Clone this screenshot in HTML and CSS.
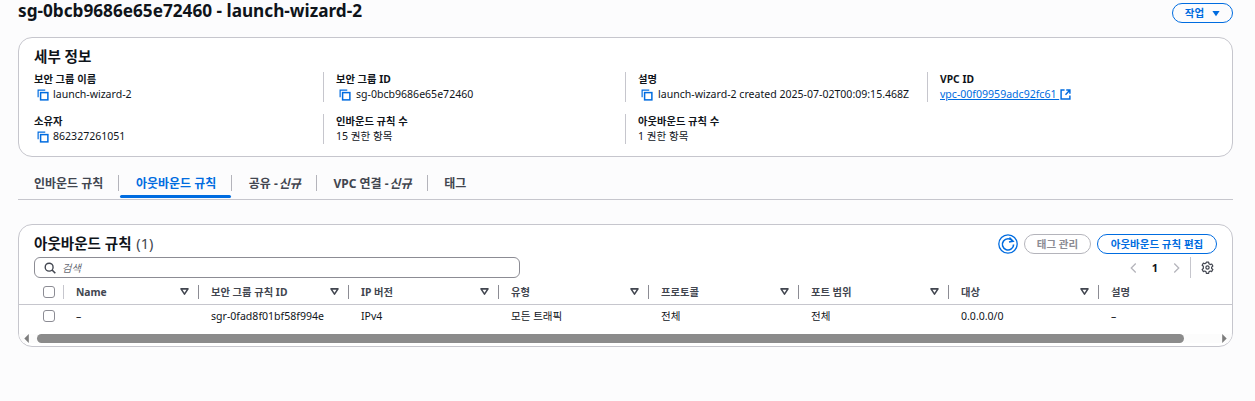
FILE: index.html
```html
<!DOCTYPE html>
<html lang="ko">
<head>
<meta charset="utf-8">
<title>sg-0bcb9686e65e72460 - launch-wizard-2</title>
<link rel="stylesheet" href="styles.css">
</head>
<body>
<svg class="defs" width="0" height="0" aria-hidden="true">
  <symbol id="copy" viewBox="0 0 16 16">
    <path d="M1.5 11V1.5H11" fill="none" stroke="currentColor" stroke-width="1.6"/>
    <rect x="4.8" y="4.8" width="9.7" height="9.7" fill="none" stroke="currentColor" stroke-width="2"/>
  </symbol>
  <symbol id="sort" viewBox="0 0 10 8">
    <path d="M1 1h8L5 7z" fill="none" stroke="currentColor" stroke-width="1.8" stroke-linejoin="round"/>
  </symbol>
</svg>
<main class="page">
  <header class="title-row">
    <h1 class="title">sg-0bcb9686e65e72460 - launch-wizard-2</h1>
    <button class="btn btn-action">작업 <svg class="caret" viewBox="0 0 10 8"><path d="M0.5 1h9L5 7.5z" fill="currentColor"/></svg></button>
  </header>

  <section class="panel details">
    <h2 class="details-title">세부 정보</h2>
    <div class="kv-grid">
      <div class="kv first"><div class="k">보안 그룹 이름</div><div class="v"><svg class="copy"><use href="#copy"/></svg>launch-wizard-2</div></div>
      <div class="kv"><div class="k">보안 그룹 ID</div><div class="v"><svg class="copy"><use href="#copy"/></svg>sg-0bcb9686e65e72460</div></div>
      <div class="kv"><div class="k">설명</div><div class="v"><svg class="copy"><use href="#copy"/></svg>launch-wizard-2 created 2025-07-02T00:09:15.468Z</div></div>
      <div class="kv"><div class="k">VPC ID</div><div class="v"><a class="link" href="#">vpc-00f09959adc92fc61 </a><svg class="ext" viewBox="0 0 12 12"><path d="M5 1.2H1.2v9.6h9.6V7" fill="none" stroke="currentColor" stroke-width="1.6"/><path d="M6 6.2 10.6 1.4M6.8 1.2h4v4" fill="none" stroke="currentColor" stroke-width="1.6"/></svg></div></div>
      <div class="kv first"><div class="k">소유자</div><div class="v"><svg class="copy"><use href="#copy"/></svg>862327261051</div></div>
      <div class="kv"><div class="k">인바운드 규칙 수</div><div class="v plain">15 권한 항목</div></div>
      <div class="kv"><div class="k">아웃바운드 규칙 수</div><div class="v plain">1 권한 항목</div></div>
    </div>
  </section>

  <nav class="tabs">
    <a class="tab">인바운드 규칙</a>
    <a class="tab active">아웃바운드 규칙</a>
    <a class="tab">공유 -<i>신규</i></a>
    <a class="tab">VPC 연결 -<i>신규</i></a>
    <a class="tab">태그</a>
  </nav>

  <section class="panel rules">
    <div class="rules-head">
      <h2 class="rules-title">아웃바운드 규칙 <span class="count">(1)</span></h2>
      <div class="actions">
        <button class="refresh" aria-label="새로 고침"><svg viewBox="0 0 20 20"><circle cx="10" cy="10" r="9.2" fill="none" stroke="currentColor" stroke-width="1.3"/><path d="M14.6 7.2A5.6 5.6 0 1 0 15.6 10.4" fill="none" stroke="currentColor" stroke-width="1.6"/><path d="M11.4 3.6 15 7.2l-4 .8" fill="none" stroke="currentColor" stroke-width="1.6"/></svg></button>
        <button class="btn btn-disabled">태그 관리</button>
        <button class="btn btn-edit">아웃바운드 규칙 편집</button>
      </div>
    </div>
    <div class="tools">
      <label class="search">
        <svg class="search-icon" viewBox="0 0 14 14"><circle cx="6" cy="6" r="4.6" fill="none" stroke="currentColor" stroke-width="1.6"/><path d="m9.4 9.4 3.8 3.8" stroke="currentColor" stroke-width="1.8"/></svg>
        <input class="search-input" placeholder="검색">
      </label>
      <div class="pager">
        <svg class="chev" viewBox="0 0 10 12"><path d="M7.5 1 2.5 6l5 5" fill="none" stroke="currentColor" stroke-width="1.4"/></svg>
        <span class="page-num">1</span>
        <svg class="chev" viewBox="0 0 10 12"><path d="M2.5 1l5 5-5 5" fill="none" stroke="currentColor" stroke-width="1.4"/></svg>
        <span class="pager-sep"></span>
        <svg class="gear" viewBox="0 0 16 16"><path d="M6.6 1.5h2.8l.4 2 1.5.9 1.9-.7 1.4 2.5-1.5 1.3v1.7l1.5 1.3-1.4 2.5-1.9-.7-1.5.9-.4 2H6.6l-.4-2-1.5-.9-1.9.7-1.4-2.5 1.5-1.3V6.5L1.4 5.2l1.4-2.5 1.9.7 1.5-.9z" fill="none" stroke="currentColor" stroke-width="1.5" stroke-linejoin="round"/><circle cx="8" cy="8" r="2" fill="none" stroke="currentColor" stroke-width="1.5"/></svg>
      </div>
    </div>
    <div class="table">
      <div class="row head">
        <div class="cell check"><span class="box"></span></div>
        <div class="cell th">Name<svg class="sort"><use href="#sort"/></svg></div>
        <div class="cell th">보안 그룹 규칙 ID<svg class="sort"><use href="#sort"/></svg></div>
        <div class="cell th">IP 버전<svg class="sort"><use href="#sort"/></svg></div>
        <div class="cell th">유형<svg class="sort"><use href="#sort"/></svg></div>
        <div class="cell th">프로토콜<svg class="sort"><use href="#sort"/></svg></div>
        <div class="cell th">포트 범위<svg class="sort"><use href="#sort"/></svg></div>
        <div class="cell th">대상<svg class="sort"><use href="#sort"/></svg></div>
        <div class="cell th">설명</div>
      </div>
      <div class="row body">
        <div class="cell check"><span class="box"></span></div>
        <div class="cell">–</div>
        <div class="cell">sgr-0fad8f01bf58f994e</div>
        <div class="cell">IPv4</div>
        <div class="cell">모든 트래픽</div>
        <div class="cell">전체</div>
        <div class="cell">전체</div>
        <div class="cell">0.0.0.0/0</div>
        <div class="cell">–</div>
      </div>
    </div>
    <div class="scrollbar">
      <svg class="arrow" viewBox="0 0 6 10"><path d="M5 0v10L0 5z" fill="currentColor"/></svg>
      <div class="track"><div class="thumb"></div></div>
      <svg class="arrow" viewBox="0 0 6 10"><path d="M1 0v10l5-5z" fill="currentColor"/></svg>
    </div>
  </section>
</main>
</body>
</html>
```
FILE: styles.css
```css
* { box-sizing: border-box; }
html, body { margin: 0; padding: 0; }
body {
  width: 1255px;
  height: 401px;
  overflow: hidden;
  background: #fcfcfd;
  color: #0f141a;
  font-family: "Noto Sans", "Noto Sans CJK KR", sans-serif;
  font-size: 11px;
  line-height: 14px;
}
.defs { position: absolute; }
.page { width: 1215px; margin-left: 18px; }
.title-row { display: flex; justify-content: space-between; align-items: flex-start; height: 37px; padding-top: 3px; }
.title { margin: -2px 0 0; font-size: 17.2px; line-height: 20px; font-weight: 700; }
.btn {
  font: 700 10.5px/14px "Noto Sans", "Noto Sans CJK KR", sans-serif;
  height: 20px;
  border-radius: 10px;
  background: #fff;
  padding: 0;
  border: 1px solid #006ce0;
  color: #006ce0;
}
.btn-action { width: 61px; display: flex; align-items: center; justify-content: center; gap: 8px; background: none; }
.caret { width: 8px; height: 7px; }
.panel { background: #fff; border: 1px solid #c6c6cd; border-radius: 14px; }
.details { height: 120px; padding: 8px 15px 0; }
.details-title { margin: 0 0 6px; font-size: 14.57px; line-height: 20px; font-weight: 700; }
.kv-grid { display: grid; grid-template-columns: 289px 302px 302px 1fr; row-gap: 12px; }
.kv { height: 30px; border-left: 1px solid #c6c6cd; padding-left: 12px; }
.kv.first { border-left: 0; padding-left: 0; }
.k { font-size: 10.3px; font-weight: 700; line-height: 15px; }
.v { font-size: 10.55px; line-height: 15px; display: flex; align-items: center; white-space: pre; }
.copy { width: 12px; height: 12px; margin: 1px 5px 0 3px; color: #006ce0; }
.kv.first .copy { margin-right: 4px; }
.link { color: #006ce0; text-decoration: underline; }
.ext { width: 11px; height: 11px; color: #006ce0; margin-left: 1px; }
.tabs { display: flex; align-items: center; height: 43px; border-bottom: 1px solid #c6c6cd; padding: 12px 0 0; }
.tab { position: relative; height: 30px; display: flex; align-items: center; padding: 0 15px 0 17.5px; font-size: 12px; font-weight: 700; color: #424650; white-space: pre; }
.tab:first-child { padding-left: 16px; }
.tab i { font-weight: 700; margin-left: 1px; }
.tab + .tab::before { content: ""; position: absolute; left: 0; top: 6px; height: 16px; width: 1px; background: #b4b4bb; }
.tab.active { color: #006ce0; }
.tab.active::after { content: ""; position: absolute; left: 2px; right: 0; bottom: 1px; height: 3px; border-radius: 2px; background: #006ce0; }
.rules { margin-top: 24px; height: 123px; overflow: hidden; padding: 0; }
.rules-head { display: flex; justify-content: space-between; align-items: center; height: 32px; padding: 3px 15px 0 15px; }
.rules-title { margin: 0; font-size: 14.57px; line-height: 20px; font-weight: 700; }
.count { font-weight: 400; color: #424650; margin-left: 1px; }
.actions { display: flex; align-items: center; gap: 6px; padding-top: 2px; }
.refresh { width: 20px; height: 20px; padding: 0; border: 0; background: none; color: #006ce0; }
.refresh svg { display: block; width: 20px; height: 20px; }
.btn-disabled { width: 67px; border-color: #b4b4bb; color: #8c8c94; }
.btn-edit { width: 120px; }
.tools { display: flex; justify-content: space-between; align-items: center; height: 21px; padding: 0 18px 0 15px; }
.search { width: 486px; height: 21px; border: 1px solid #8c8c94; border-radius: 6px; display: flex; align-items: center; padding-left: 9px; color: #424650; }
.search-icon { width: 12px; height: 12px; }
.search-input { border: 0; outline: 0; background: none; margin-left: 6px; padding: 0; font: italic 10.3px "Noto Sans", "Noto Sans CJK KR", sans-serif; }
.search-input::placeholder { color: #656871; }
.pager { display: flex; align-items: center; height: 21px; color: #b4b4bb; }
.chev { width: 9px; height: 12px; }
.page-num { width: 34px; text-align: center; font-size: 11px; font-weight: 700; color: #0f141a; }
.pager-sep { width: 1px; height: 21px; background: #c6c6cd; margin: 0 10px 0 9px; }
.gear { width: 13px; height: 13px; color: #424650; }
.table { margin-top: 2px; }
.row { display: grid; grid-template-columns: 44px 135px repeat(6, 150px) 1fr; align-items: center; }
.head { height: 25px; border-bottom: 1px solid #c6c6cd; padding-bottom: 1px; }
.body { height: 29px; padding-bottom: 7px; }
.cell { padding-left: 13px; font-size: 10.55px; white-space: nowrap; display: flex; align-items: center; justify-content: space-between; }
.cell.check { padding-left: 24px; }
.th { font-size: 10.3px; font-weight: 700; color: #424650; height: 14px; padding-left: 12px; padding-right: 9px; border-left: 1px solid #8c8c94; }
.head .cell:nth-child(2) { border-left-color: #c6c6cd; }
.box { display: block; width: 12px; height: 12px; border: 1px solid #8c8c94; border-radius: 3px; background: #fff; }
.sort { width: 9px; height: 7px; color: #424650; }
.scrollbar { display: flex; align-items: center; height: 9px; padding: 0 5px; background: #fcfcfc; }
.arrow { width: 6px; height: 9px; color: #7c7c7c; }
.track { flex: 1; height: 9px; padding: 0 35px 0 5px; margin: 0 2px; }
.thumb { height: 9px; background: #8b8b8b; border-radius: 5px; }
```
